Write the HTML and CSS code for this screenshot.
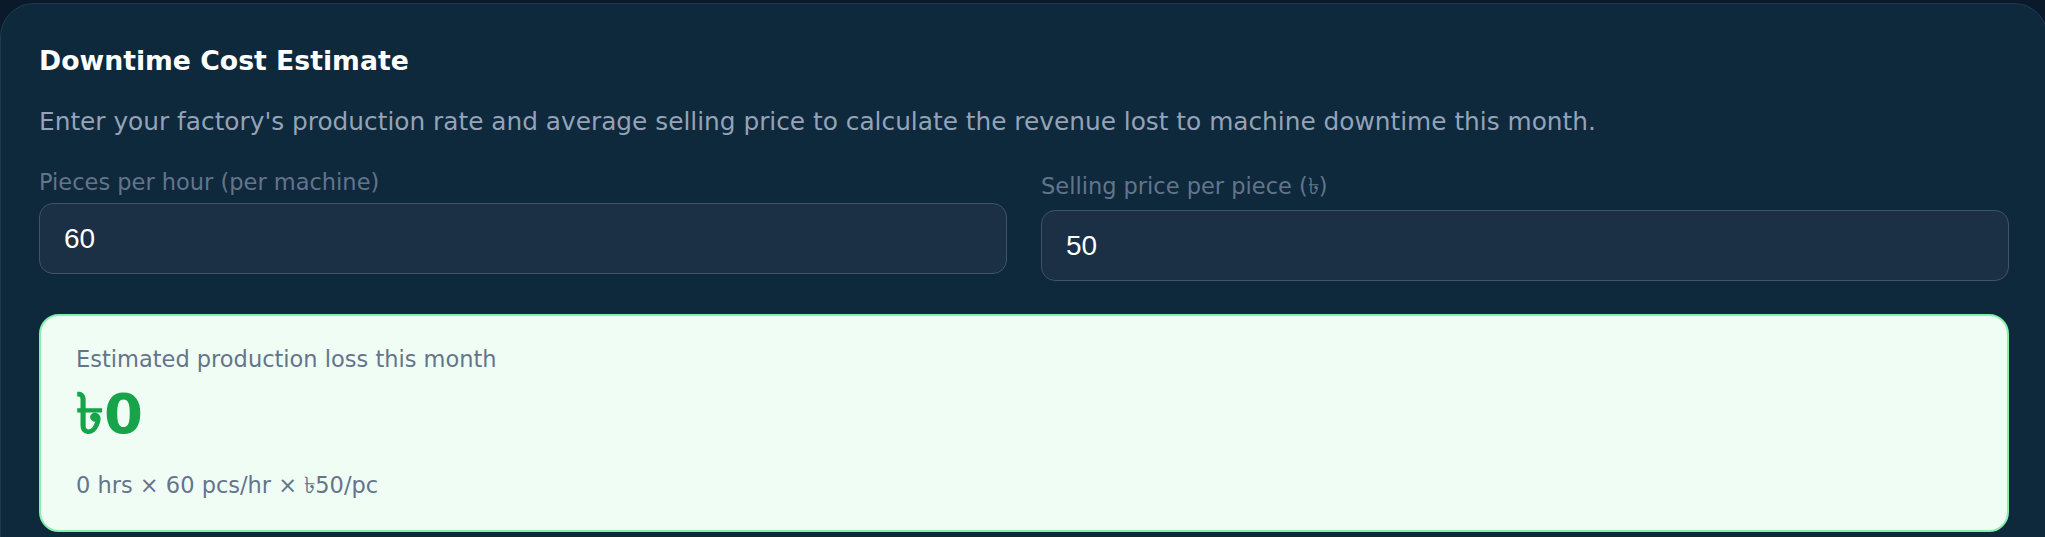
FILE: index.html
```html
<!DOCTYPE html>
<html>

<head>
    <meta charset="utf-8">
    <title>Downtime Cost Estimate</title>
    <link rel="stylesheet" href="styles.css">
</head>

<body>
    <div class="page">
        <section class="card">
            <h2 class="card-title">Downtime Cost Estimate</h2>
            <p class="card-desc">Enter your factory's production rate and average selling price to calculate the revenue lost to machine downtime this month.</p>

            <div class="fields">
                <label class="field">
                    <span class="field-label">Pieces per hour (per machine)</span>
                    <input type="number" class="field-input" value="60">
                </label>
                <label class="field">
                    <span class="field-label has-symbol">Selling price per piece (৳)</span>
                    <input type="number" class="field-input" value="50">
                </label>
            </div>

            <div class="result">
                <div class="result-label">Estimated production loss this month</div>
                <div class="result-value">৳0</div>
                <div class="result-formula">0 hrs × 60 pcs/hr × ৳50/pc</div>
            </div>
        </section>
    </div>
</body>

</html>
```

FILE: styles.css
```css
html,
body {
    margin: 0;
    padding: 0;
    background: #0a1a2a;
    font-family: "DejaVu Sans", sans-serif;
    overflow: hidden;
}

.page {
    padding-top: 3px;
}

.card {
    margin-right: -3px;
    padding: 41px 38px 40px;
    background: #0e283c;
    border: 1px solid #1f3a50;
    border-radius: 34px;
}

.card-title {
    margin: 0;
    font-size: 26.7px;
    line-height: 32px;
    font-weight: 700;
    color: #ffffff;
}

.card-desc {
    margin: 30px 0 0;
    font-size: 24.8px;
    line-height: 30px;
    color: #94a3b8;
}

.fields {
    display: grid;
    grid-template-columns: 1fr 1fr;
    gap: 34px;
    margin-top: 32px;
    align-items: start;
}

.field {
    display: flex;
    flex-direction: column;
    gap: 7px;
}

.field-label {
    font-size: 22.5px;
    line-height: 27px;
    color: #64748b;

    /* the taka sign comes from a taller fallback font */
    &.has-symbol {
        line-height: 34px;
    }
}

.field-input {
    box-sizing: border-box;
    height: 71px;
    padding: 0 24px;
    font-family: "Liberation Sans", Arial, sans-serif;
    font-size: 28px;
    color: #ffffff;
    background: #1b2f45;
    border: 1.5px solid #3f5369;
    border-radius: 14px;
    outline: none;
    -moz-appearance: textfield;

    &::-webkit-inner-spin-button,
    &::-webkit-outer-spin-button {
        -webkit-appearance: none;
        margin: 0;
    }
}

.result {
    margin-top: 33px;
    padding: 30px 35px 31px;
    background: #f0fdf4;
    border: 2px solid #86efac;
    border-radius: 20px;
    color: #64748b;
}

.result-label,
.result-formula {
    font-size: 22.5px;
    line-height: 27px;
}

.result-value {
    margin: 10px 0 27px;
    font-size: 56px;
    line-height: 62px;
    font-weight: 700;
    color: #16a34a;
}
```
